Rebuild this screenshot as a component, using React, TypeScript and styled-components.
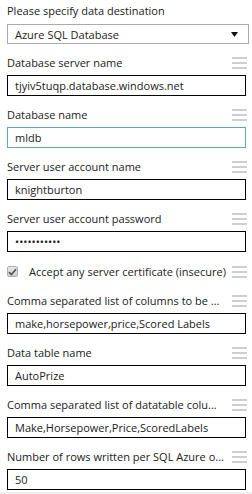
import React from 'react';
import styled, { createGlobalStyle } from 'styled-components';

const GlobalStyle = createGlobalStyle`
  html, body {
    margin: 0;
    padding: 0;
    background: #ffffff;
  }
  body {
    font-family: 'Open Sans', 'Noto Sans', sans-serif;
    font-size: 11px;
    color: #222222;
  }
`;

interface FieldProps {
  label: string;
  value: string;
  focused?: boolean;
  password?: boolean;
}

function Handle() {
  return (
    <UIHandle width="15" height="12" viewBox="0 0 15 12">
      <rect x="0" y="0" width="15" height="2" fill="#cfcfcf" />
      <rect x="0" y="5" width="15" height="2" fill="#cfcfcf" />
      <rect x="0" y="10" width="15" height="2" fill="#cfcfcf" />
    </UIHandle>
  );
}

function Field({ label, value, focused = false, password = false }: FieldProps) {
  return (
    <UIField>
      <UILabelRow>
        <UILabel>{label}</UILabel>
        <Handle />
      </UILabelRow>
      <UIInput
        type={password ? 'password' : 'text'}
        defaultValue={value}
        isFocused={focused}
        readOnly
      />
    </UIField>
  );
}

export default function App() {
  return (
    <>
      <GlobalStyle />
      <UIPanel>
        <UIDestLabel>Please specify data destination</UIDestLabel>
        <UISelect>
          <span>Azure SQL Database</span>
          <svg width="7" height="5" viewBox="0 0 7 5">
            <path d="M0 0 L7 0 L3.5 5 Z" fill="#111" />
          </svg>
        </UISelect>

        <Field label="Database server name" value="tjyiv5tuqp.database.windows.net" />
        <Field label="Database name" value="mldb" focused />
        <Field label="Server user account name" value="knightburton" />
        <Field label="Server user account password" value="aaaaaaaaaaa" password />

        <UICheckRow>
          <UICheckBox>
            <svg width="9" height="8" viewBox="0 0 9 8">
              <path d="M1 4.2 L3.4 6.5 L8 1.2" stroke="#555555" strokeWidth="1.7" fill="none" />
            </svg>
          </UICheckBox>
          <UICheckText>Accept any server certificate (insecure)</UICheckText>
          <Handle />
        </UICheckRow>

        <Field label="Comma separated list of columns to be ..." value="make,horsepower,price,Scored Labels" />
        <Field label="Data table name" value="AutoPrize" />
        <Field label="Comma separated list of datatable colu..." value="Make,Horsepower,Price,ScoredLabels" />
        <Field label="Number of rows written per SQL Azure o..." value="50" />
      </UIPanel>
      <UIFooter />
    </>
  );
}

const UIPanel = styled.div`
  width: 252px;
  box-sizing: border-box;
  padding: 2px 0 0 7px;
  display: flex;
  flex-direction: column;
`;

const UIDestLabel = styled.div`
  line-height: 17px;
  height: 17px;
  white-space: nowrap;
`;

const UISelect = styled.div`
  margin: 5px 0 10px;
  width: 242px;
  height: 20px;
  box-sizing: border-box;
  border: 1px solid #ababab;
  background: #ffffff;
  display: flex;
  align-items: center;
  justify-content: space-between;
  padding: 0 10px 0 7px;
  line-height: 17px;

  svg {
    margin-top: 1px;
  }
`;

const UIField = styled.div`
  display: flex;
  flex-direction: column;
  margin-bottom: 10px;
`;

const UILabelRow = styled.div`
  width: 240px;
  height: 17px;
  margin-bottom: 4px;
  display: flex;
  align-items: flex-start;
  justify-content: space-between;
`;

const UILabel = styled.div`
  line-height: 17px;
  white-space: nowrap;
`;

const UIHandle = styled.svg`
  flex: none;
  margin-top: 3px;
`;

const UIInput = styled.input<{ isFocused: boolean }>`
  width: 239px;
  height: 21px;
  box-sizing: border-box;
  margin: 0;
  padding: 0 7px;
  border: 1px solid ${(props) => (props.isFocused ? '#5aa8c8' : '#000000')};
  border-radius: 0;
  outline: none;
  background: #ffffff;
  font-family: inherit;
  font-size: 11px;
  color: #222222;
`;

const UICheckRow = styled.div`
  width: 240px;
  height: 30px;
  box-sizing: border-box;
  padding-top: 1px;
  display: flex;
  align-items: flex-start;
`;

const UICheckBox = styled.div`
  width: 11px;
  height: 11px;
  margin: 3px 11px 0 0;
  box-sizing: border-box;
  border: 1px solid #b0b0b0;
  border-radius: 2px;
  background: linear-gradient(#e6e6e6, #d2d2d2);
  display: flex;
  align-items: center;
  justify-content: center;
  flex: none;
`;

const UICheckText = styled.div`
  flex: 1;
  line-height: 17px;
  white-space: nowrap;
`;

const UIFooter = styled.div`
  height: 3px;
  margin-top: -8px;
  background: #f0f0f0;
`;
